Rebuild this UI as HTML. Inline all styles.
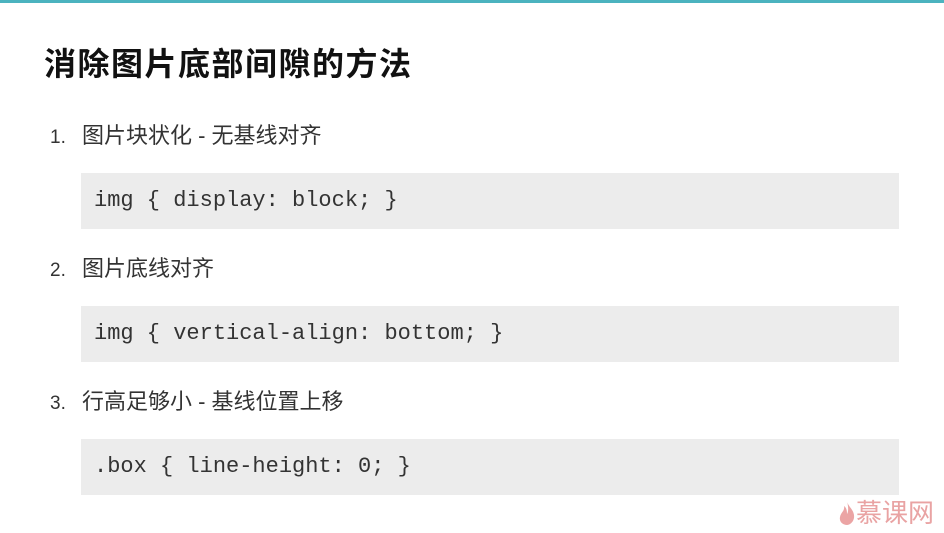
<!DOCTYPE html>
<html><head><meta charset="utf-8"><style>
body{margin:0;width:944px;height:533px;background:#fff;position:relative;overflow:hidden;font-family:"Liberation Sans","Noto Sans CJK SC",sans-serif;}
.bar{position:absolute;left:0;top:0;width:944px;height:3px;background:#4bb3bf}
.t{position:absolute;left:44px;top:44px;font-size:32px;font-weight:bold;color:#111;line-height:40px;letter-spacing:1.5px}
.li{position:absolute;left:50px;font-size:22px;color:#333;line-height:26px}
.li span{display:inline-block;width:32px;font-size:19px}
.code{position:absolute;left:81px;width:818px;height:56px;background:#ececec;font-family:"Liberation Mono",monospace;font-size:22px;color:#333;line-height:56px;padding-left:13px;box-sizing:border-box}
.logo{position:absolute;left:838px;top:498px;font-size:26px;color:#e9a3a3;line-height:30px}
</style></head><body>
<div class="bar"></div>
<div class="t">消除图片底部间隙的方法</div>
<div class="li" style="top:123px"><span>1.</span>图片块状化 - 无基线对齐</div>
<div class="code" style="top:173px">img { display: block; }</div>
<div class="li" style="top:256px"><span>2.</span>图片底线对齐</div>
<div class="code" style="top:306px">img { vertical-align: bottom; }</div>
<div class="li" style="top:389px"><span>3.</span>行高足够小 - 基线位置上移</div>
<div class="code" style="top:439px">.box { line-height: 0; }</div>
<div class="logo"><svg width="18" height="26" viewBox="0 0 18 26" style="vertical-align:-4px"><path d="M9 1C10 7 17 10 16 18C15 23 11 25 9 25C5 25 1 22 2 17C3 12 7 11 6 6C9 8 9 12 9 14C11 11 10 5 9 1Z" fill="#eba4a4"/></svg>慕课网</div>
</body></html>
